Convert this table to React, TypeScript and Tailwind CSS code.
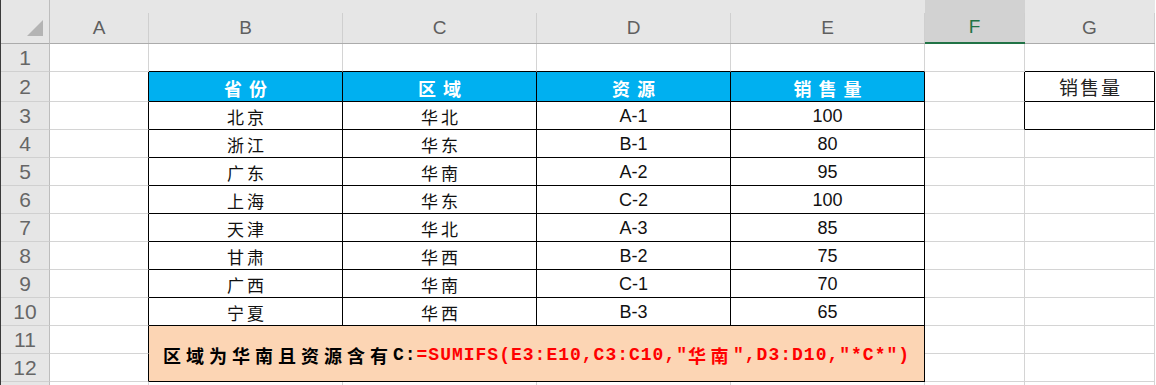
import type { ReactNode } from "react";

const columns = ["A", "B", "C", "D", "E", "F", "G"];

const data = [
	["北京", "华北", "A-1", "100"],
	["浙江", "华东", "B-1", "80"],
	["广东", "华南", "A-2", "95"],
	["上海", "华东", "C-2", "100"],
	["天津", "华北", "A-3", "85"],
	["甘肃", "华西", "B-2", "75"],
	["广西", "华南", "C-1", "70"],
	["宁夏", "华西", "B-3", "65"],
];

const cjk = "font-['Noto_Sans_CJK_SC',sans-serif]";
const latin = "font-['Liberation_Sans','Noto_Sans_CJK_SC',sans-serif]";
const mono = "font-['Liberation_Mono','Noto_Sans_CJK_SC',monospace]";

function Cell({
	right = false,
	bottom = false,
	className = "",
	children,
}: {
	right?: boolean;
	bottom?: boolean;
	className?: string;
	children?: ReactNode;
}) {
	return (
		<div
			className={`flex items-center justify-center border-r border-b ${
				right ? "border-r-black" : "border-r-[#d4d4d4]"
			} ${bottom ? "border-b-black" : "border-b-[#d4d4d4]"} ${className}`}
		>
			{children}
		</div>
	);
}

function RowHead({ n }: { n?: number }) {
	return (
		<div
			className={`flex items-center justify-center pt-[1px] bg-[#e6e6e6] border-r border-b border-r-[#bdbdbd] border-b-[#d0d0d0] text-[21px] text-[#666] ${latin}`}
		>
			{n}
		</div>
	);
}

export default function App() {
	return (
		<div className="w-[1156px] h-[385px] overflow-hidden bg-white border-l border-[#3a3a3a]">
			<div className="grid grid-cols-[49px_99px_194px_194px_194px_194px_100px_130px] grid-rows-[44px_28px_30px_repeat(11,28px)]">
				{/* corner */}
				<div className="bg-[#e6e6e6] border-r border-b border-r-[#bdbdbd] border-b-[#ababab] flex items-end justify-end pr-[6px] pb-[7px]">
					<svg width="16" height="16" viewBox="0 0 16 16">
						<polygon points="16,0 16,16 0,16" fill="#b4b4b4" />
					</svg>
				</div>
				{columns.map((c) => (
					<div
						key={c}
						className={`pt-[13px] border-b ${
							c === "F"
								? "bg-[#d2d2d2] border-b-2 border-b-[#217346]"
								: "bg-[#e6e6e6] border-b-[#ababab]"
						}`}
					>
						<div
							className={`h-full flex items-center justify-center border-r border-[#cfcfcf] text-[19px] ${latin} ${
								c === "F" ? "text-[#217346]" : "text-[#5f5f5f]"
							}`}
						>
							{c}
						</div>
					</div>
				))}

				{/* row 1 */}
				<RowHead n={1} />
				<Cell />
				<Cell bottom />
				<Cell bottom />
				<Cell bottom />
				<Cell bottom />
				<Cell />
				<Cell bottom />

				{/* row 2 header */}
				<RowHead n={2} />
				<Cell right />
				{["省份", "区域", "资源", "销售量"].map((h) => (
					<Cell key={h} right bottom className="bg-[#00b0f0]">
						<span
							className={`text-white font-bold text-[18px] tracking-[7px] pl-[7px] pt-[4px] ${cjk}`}
						>
							{h}
						</span>
					</Cell>
				))}
				<Cell right />
				<Cell right bottom>
					<span className={`text-[19px] tracking-[2px] pl-[2px] pt-[2px] text-[#222] ${cjk}`}>
						销售量
					</span>
				</Cell>

				{/* data rows */}
				{data.map((row, i) => (
					<div key={i} className="contents">
						<RowHead n={i + 3} />
						<Cell right />
						<Cell right bottom>
							<span className={`text-[17px] tracking-[3px] pl-[3px] pt-[2px] text-[#111] ${cjk}`}>
								{row[0]}
							</span>
						</Cell>
						<Cell right bottom>
							<span className={`text-[17px] tracking-[3px] pl-[3px] pt-[2px] text-[#111] ${cjk}`}>
								{row[1]}
							</span>
						</Cell>
						<Cell right bottom>
							<span className={`text-[18px] pt-[2px] text-[#111] ${latin}`}>{row[2]}</span>
						</Cell>
						<Cell right bottom>
							<span className={`text-[18px] pt-[2px] text-[#111] ${latin}`}>{row[3]}</span>
						</Cell>
						<Cell right={i === 0} />
						<Cell right={i === 0} bottom={i === 0} />
					</div>
				))}

				{/* row 11 with merged formula cell */}
				<RowHead n={11} />
				<Cell right />
				<div className="col-span-4 row-span-2 flex items-center justify-center bg-[#fcd5b4] border-r border-b border-black pt-[3px]">
					<span className={`font-bold text-[18px] tracking-[5px] text-black ${cjk}`}>
						区域为华南且资源含有
					</span>
					<span className={`font-bold text-[18px] tracking-[1px] text-black ${mono}`}>
						C:
					</span>
					<span className={`font-bold text-[18px] tracking-[1px] text-[#ff0000] ${mono}`}>
						=SUMIFS(E3:E10,C3:C10,"
					</span>
					<span className={`font-bold text-[18px] tracking-[4.5px] text-[#ff0000] ${cjk}`}>
						华南
					</span>
					<span className={`font-bold text-[18px] tracking-[1px] text-[#ff0000] ${mono}`}>
						",D3:D10,"*C*")
					</span>
				</div>
				<Cell />
				<Cell />

				{/* row 12 */}
				<RowHead n={12} />
				<Cell right />
				<Cell />
				<Cell />

				{/* row 13, only its top edge shows */}
				<RowHead />
				<Cell />
				<Cell />
				<Cell />
				<Cell />
				<Cell />
				<Cell />
				<Cell />
			</div>
		</div>
	);
}
